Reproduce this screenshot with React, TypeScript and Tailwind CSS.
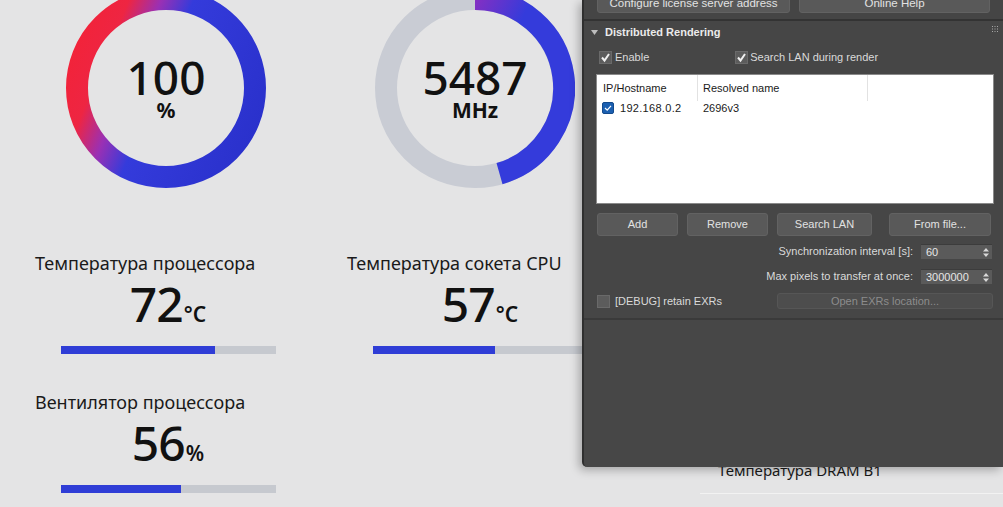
import React from "react";

const R = 89;

function Gauge1() {
  return (
    <div className="relative w-[200px] h-[200px] shrink-0">
      <svg width="200" height="200" className="absolute inset-0">
        <defs>
          <linearGradient id="g1" gradientUnits="userSpaceOnUse" x1="7.6" y1="61.7" x2="192.4" y2="138.3">
            <stop offset="0" stopColor="#f2233a" />
            <stop offset="0.16" stopColor="#ee2542" />
            <stop offset="0.31" stopColor="#9a30b4" />
            <stop offset="0.46" stopColor="#343bdb" />
            <stop offset="1" stopColor="#2a31cc" />
          </linearGradient>
        </defs>
        <circle cx="100" cy="100" r={R} fill="none" stroke="url(#g1)" strokeWidth="22" />
      </svg>
      <div className="absolute inset-0 flex flex-col items-center justify-center text-[#111]">
        <div className="text-[46px] leading-[44px] font-medium">100</div>
        <div className="text-[21px] leading-[22px] font-bold">%</div>
      </div>
    </div>
  );
}

function Gauge2() {
  return (
    <div className="relative w-[200px] h-[200px] shrink-0">
      <svg width="200" height="200" className="absolute inset-0">
        <defs>
          <linearGradient id="g2" gradientUnits="userSpaceOnUse" x1="100" y1="0" x2="150" y2="25">
            <stop offset="0" stopColor="#8e2ec0" />
            <stop offset="1" stopColor="#343bdb" />
          </linearGradient>
        </defs>
        <circle cx="100" cy="100" r={R} fill="none" stroke="#c9ccd4" strokeWidth="22" />
        <path d="M 100 11 A 89 89 0 0 1 124.5 185.6" fill="none" stroke="url(#g2)" strokeWidth="22" />
      </svg>
      <div className="absolute inset-0 flex flex-col items-center justify-center text-[#111]">
        <div className="text-[46px] leading-[44px] font-medium">5487</div>
        <div className="text-[21px] leading-[22px] font-bold">MHz</div>
      </div>
    </div>
  );
}

function Stat({ label, value, unit, pct }: { label: string; value: string; unit: string; pct: number }) {
  return (
    <div className="flex flex-col">
      <div className="pl-[23px] text-[18px] leading-[24px] text-[#1a1a1a] whitespace-nowrap">{label}</div>
      <div className="mt-[5px] h-[48px] flex items-baseline justify-center leading-none text-[#111]">
        <span className="text-[48px] font-medium tracking-[-1px]">{value}</span>
        <span className="text-[21px] font-semibold ml-[1px]">{unit}</span>
      </div>
      <div className="mt-[18px] mx-auto w-[215px] h-[8px] bg-[#c6c9cf]">
        <div className="h-full bg-[#2f3dd6]" style={{ width: `${pct}%` }} />
      </div>
    </div>
  );
}

function Check({ checked }: { checked?: boolean }) {
  return (
    <div className="w-[13px] h-[13px] bg-[#5c5c5c] border border-[#6a6a6a] flex items-center justify-center shrink-0">
      {checked && (
        <svg width="11" height="11" viewBox="0 0 11 11">
          <path d="M2 5.5 L4.5 8.5 L9 2" fill="none" stroke="#f0f0f0" strokeWidth="2" />
        </svg>
      )}
    </div>
  );
}

function Btn({ w, children, disabled }: { w: string; children: React.ReactNode; disabled?: boolean }) {
  return (
    <div
      className={`${w} h-full rounded-[3px] flex items-center justify-center whitespace-nowrap ${
        disabled ? "bg-[#4d4d4d] border border-[#565656] text-[#8c8c8c]" : "bg-[#595959] border border-[#626262] text-[#e2e2e2]"
      }`}
    >
      {children}
    </div>
  );
}

function Spinner({ value }: { value: string }) {
  return (
    <div className="w-[71px] h-full bg-[#5a5a5a] border-t border-[#3c3c3c] flex items-center pl-[5px] pr-[3px] text-[#e6e6e6]">
      <span className="flex-1">{value}</span>
      <svg width="6" height="9" viewBox="0 0 6 9">
        <path d="M3 0 L6 3.5 L0 3.5 Z M0 5.5 L6 5.5 L3 9 Z" fill="#d8d8d8" />
      </svg>
    </div>
  );
}

function Panel() {
  return (
    <div className="absolute left-[582px] top-0 w-[421px] h-[467px] bg-[#474747] border-l-2 border-[#2f2f2f] rounded-bl-[5px] shadow-[-3px_3px_10px_rgba(0,0,0,0.28)] flex flex-col text-[11px] leading-none text-[#dadada] [font-family:'Liberation_Sans',Arial,sans-serif]">
      <div className="h-[19px] bg-[#454545] px-[13px] flex gap-[9px] items-end pb-[6px]">
        <div className="h-[22px] flex gap-[9px] text-[11.5px]">
          <Btn w="w-[193px]">
            <span className="mt-[4px]">Configure license server address</span>
          </Btn>
          <Btn w="w-[191px]">
            <span className="mt-[4px]">Online Help</span>
          </Btn>
        </div>
      </div>
      <div className="h-[2px] bg-[#333333]" />
      <div className="bg-[#464646] pl-[12px] pr-[9px] pb-[9px] border-b-2 border-[#3a3a3a] flex flex-col">
        <div className="h-[22px] flex items-center relative">
          <svg width="7" height="5" viewBox="0 0 7 5" className="ml-[-5px]">
            <path d="M0 0 L7 0 L3.5 5 Z" fill="#bdbdbd" />
          </svg>
          <span className="ml-[7px] font-bold text-[#ebebeb]">Distributed Rendering</span>
          <svg width="6" height="6" viewBox="0 0 6 6" className="ml-auto mr-[-4px] mt-[-6px]">
            {[0, 2.5, 5].map((x) =>
              [0, 2.5, 5].map((y) => <rect key={`${x}-${y}`} x={x} y={y} width="1" height="1" fill="#a8a8a8" />)
            )}
          </svg>
        </div>
        <div className="mt-[7px] h-[14px] flex items-center">
          <div className="ml-[3px]"><Check checked /></div>
          <span className="ml-[3px]">Enable</span>
          <div className="ml-[86px]"><Check checked /></div>
          <span className="ml-[2px]">Search LAN during render</span>
        </div>
        <div className="mt-[10px] h-[130px] bg-white border border-[#8a8a8a] text-[#1a1a1a] flex flex-col">
          <div className="h-[26px] flex">
            <div className="w-[101px] pl-[6px] flex items-center border-r border-[#e2e2e2]">IP/Hostname</div>
            <div className="w-[170px] pl-[5px] flex items-center border-r border-[#e2e2e2]">Resolved name</div>
          </div>
          <div className="h-[14px] flex items-center">
            <div className="ml-[5px] w-[12px] h-[12px] rounded-[2px] bg-[#1b5fb0] border border-[#134a8c] flex items-center justify-center">
              <svg width="8" height="8" viewBox="0 0 8 8">
                <path d="M1 4 L3.2 6.2 L7 1.8" fill="none" stroke="#ffffff" strokeWidth="1.2" />
              </svg>
            </div>
            <span className="ml-[6px] w-[83px] tracking-[0.3px]">192.168.0.2</span>
            <span>2696v3</span>
          </div>
        </div>
        <div className="mt-[9px] h-[23px] flex pl-[1px]">
          <Btn w="w-[81px]">Add</Btn>
          <div className="w-[9px]" />
          <Btn w="w-[81px]">Remove</Btn>
          <div className="w-[9px]" />
          <Btn w="w-[95px]">Search LAN</Btn>
          <div className="w-[17px]" />
          <Btn w="w-[102px]">From file...</Btn>
        </div>
        <div className="mt-[8px] h-[15px] flex items-center justify-end pr-[2px]">
          <span className="mr-[8px]">Synchronization interval [s]:</span>
          <Spinner value="60" />
        </div>
        <div className="mt-[10px] h-[15px] flex items-center justify-end pr-[2px]">
          <span className="mr-[8px]">Max pixels to transfer at once:</span>
          <Spinner value="3000000" />
        </div>
        <div className="mt-[9px] h-[16px] flex items-center">
          <div className="ml-[1px]"><Check /></div>
          <span className="ml-[5px]">[DEBUG] retain EXRs</span>
          <div className="ml-auto mr-[1px] h-full">
            <Btn w="w-[216px]" disabled>Open EXRs location...</Btn>
          </div>
        </div>
      </div>
      <div className="flex-1 bg-[#474747] rounded-bl-[5px]" />
    </div>
  );
}

export default function App() {
  return (
    <div className="relative w-[1003px] h-[507px] overflow-hidden bg-[#e4e4e5] [font-family:'Noto_Sans',sans-serif]">
      <div className="flex pl-[66px] gap-[109px] mt-[-12px]">
        <Gauge1 />
        <Gauge2 />
      </div>
      <div className="mt-[63px] pl-[12px] grid grid-cols-[312px_312px_312px] gap-y-[36px]">
        <Stat label="Температура процессора" value="72" unit="°C" pct={72} />
        <Stat label="Температура сокета CPU" value="57" unit="°C" pct={57} />
        <div />
        <Stat label="Вентилятор процессора" value="56" unit="%" pct={56} />
        <div />
        <div className="mt-[70px] pl-[82px] text-[15px] leading-[20px] text-[#1a1a1a] whitespace-nowrap">
          Температура DRAM B1
        </div>
      </div>
      <div className="absolute left-[700px] right-0 top-[493px] h-[1px] bg-[#f2f2f2]" />
      <Panel />
    </div>
  );
}
